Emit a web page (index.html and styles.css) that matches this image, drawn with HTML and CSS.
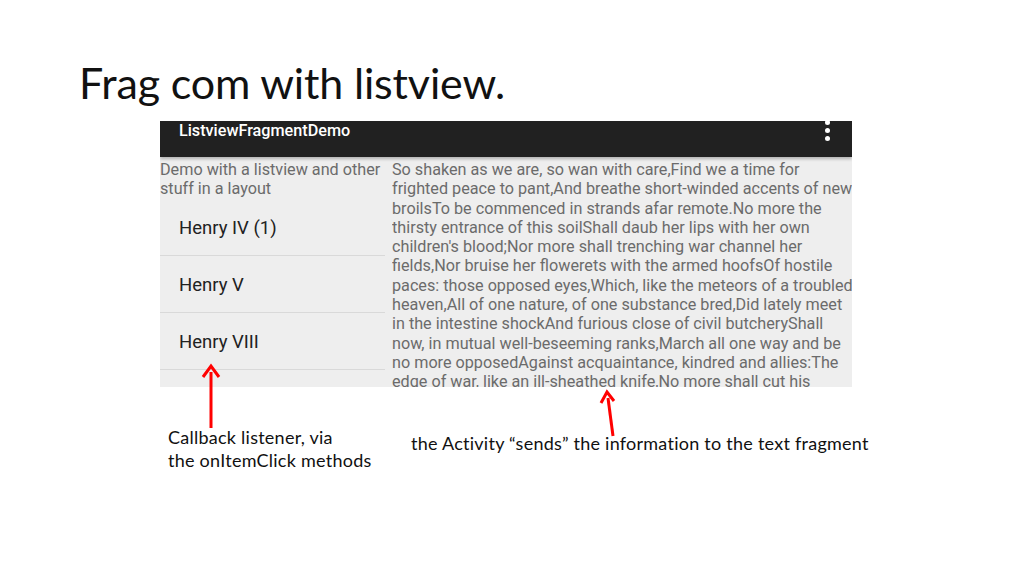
FILE: index.html
```html
<!DOCTYPE html>
<html>
<head>
<meta charset="utf-8">
<link rel="stylesheet" href="styles.css">
</head>
<body>
<div class="slide">
  <h1 class="title">Frag com with listview.</h1>
  <div class="phone">
    <div class="toolbar">
      <span class="app-title">ListviewFragmentDemo</span>
      <span class="overflow"><i></i><i></i><i></i></span>
    </div>
    <div class="content">
      <div class="left">
        <div class="intro">Demo with a listview and other stuff in a layout</div>
        <ul class="list">
          <li>Henry IV (1)</li>
          <li>Henry V</li>
          <li>Henry VIII</li>
          <li></li>
        </ul>
      </div>
      <div class="right">So shaken as we are, so wan with care,Find we a time for<br>frighted peace to pant,And breathe short-winded accents of new<br>broilsTo be commenced in strands afar remote.No more the<br>thirsty entrance of this soilShall daub her lips with her own<br>children's blood;Nor more shall trenching war channel her<br>fields,Nor bruise her flowerets with the armed hoofsOf hostile<br>paces: those opposed eyes,Which, like the meteors of a troubled<br>heaven,All of one nature, of one substance bred,Did lately meet<br>in the intestine shockAnd furious close of civil butcheryShall<br>now, in mutual well-beseeming ranks,March all one way and be<br>no more opposedAgainst acquaintance, kindred and allies:The<br>edge of war, like an ill-sheathed knife,No more shall cut his</div>
    </div>
  </div>
  <div class="notes">
    <div class="note note-left">Callback listener, via<br>the onItemClick methods</div>
    <div class="note note-right">the Activity “sends” the information to the text fragment</div>
  </div>
  <svg class="arrows" width="1024" height="576" viewBox="0 0 1024 576">
    <line x1="211" y1="428" x2="211" y2="372" stroke="#ff0000" stroke-width="3"/>
    <polyline points="203,377 211,366 219,377" fill="none" stroke="#ff0000" stroke-width="3"/>
    <line x1="613" y1="436" x2="608" y2="398" stroke="#ff0000" stroke-width="3"/>
    <polyline points="601,403 607,392 614,401" fill="none" stroke="#ff0000" stroke-width="3"/>
  </svg>
</div>
</body>
</html>
```
FILE: styles.css
```css
html, body {
  margin: 0;
  padding: 0;
  background: #ffffff;
}
.slide {
  position: relative;
  width: 1024px;
  height: 576px;
  overflow: hidden;
  background: #ffffff;
}
.title {
  margin: 0;
  padding: 58px 0 0 79px;
  height: 63px;
  font-family: "Lato", "Open Sans", sans-serif;
  font-weight: 400;
  font-size: 43px;
  line-height: 50px;
  color: #111111;
  letter-spacing: -0.15px;
}
.phone {
  margin-left: 160px;
  width: 692px;
  height: 266px;
  display: flex;
  flex-direction: column;
  overflow: hidden;
}
.toolbar {
  height: 36px;
  flex: none;
  background: #212121;
  display: flex;
  justify-content: space-between;
  align-items: flex-start;
  padding: 0 0 0 19px;
  box-shadow: 0 2px 3px rgba(0,0,0,0.25);
  position: relative;
  z-index: 1;
}
.app-title {
  font-family: "Roboto", sans-serif;
  font-weight: 500;
  font-size: 16.2px;
  line-height: 18px;
  color: #ffffff;
  margin-top: 1px;
}
.overflow {
  display: flex;
  flex-direction: column;
  align-items: center;
  gap: 3px;
  width: 10px;
  margin: 0 20px 0 0;
  transform: translateY(-1px);
}
.overflow i {
  display: block;
  width: 5px;
  height: 5px;
  border-radius: 50%;
  background: #ffffff;
}
.content {
  flex: 1;
  background: #eeeeee;
  display: grid;
  grid-template-columns: 225px 1fr;
  column-gap: 7px;
  overflow: hidden;
  font-family: "Roboto", sans-serif;
}
.left {
  overflow: hidden;
}
.intro {
  padding-top: 3px;
  height: 39px;
  font-size: 16.2px;
  line-height: 19.3px;
  color: #6b6b6b;
}
.list {
  list-style: none;
  margin: 0;
  padding: 0;
}
.list li {
  height: 56px;
  border-bottom: 1px solid #d9d9d9;
  padding-left: 19px;
  font-size: 18.5px;
  line-height: 58px;
  color: #212121;
  overflow: hidden;
}
.right {
  padding-top: 3px;
  font-size: 16.2px;
  line-height: 19.3px;
  color: #6b6b6b;
  white-space: nowrap;
  overflow: hidden;
}
.notes {
  display: flex;
  align-items: flex-start;
  margin-top: 39px;
}
.note {
  font-family: "Lato", "Open Sans", sans-serif;
  font-size: 18px;
  letter-spacing: 0.25px;
  color: #111111;
}
.note-left {
  margin-left: 168px;
  line-height: 23px;
  width: 243px;
}
.note-right {
  margin-top: 6px;
  line-height: 23px;
}
.arrows {
  position: absolute;
  left: 0;
  top: 0;
  pointer-events: none;
}
```
